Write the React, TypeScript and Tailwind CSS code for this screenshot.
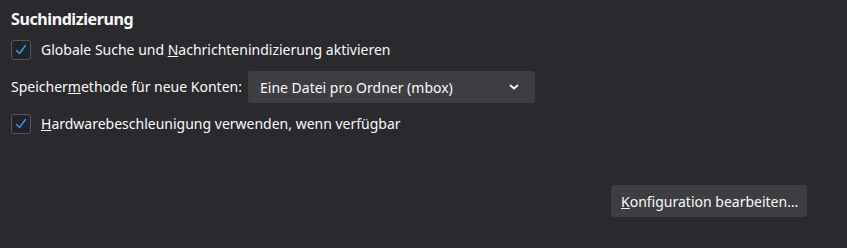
import React from 'react';

const Check = () => (
  <span className="flex h-[20px] w-[20px] shrink-0 items-center justify-center rounded-[3px] border border-[#56565b] bg-[#232327]">
    <svg width="14" height="14" viewBox="0 0 14 14" fill="none">
      <path d="M2.5 7.5 L5.5 10.5 L11.5 2.5" stroke="#2a9bf0" strokeWidth="1.5" strokeLinecap="round" strokeLinejoin="round" />
    </svg>
  </span>
);

const App = () => {
  return (
    <div
      className="h-[248px] w-[847px] overflow-hidden whitespace-nowrap bg-[#2a2a2e] text-[14px] text-[#f9f9fa]"
      style={{ fontFamily: '"Noto Sans", "Open Sans", sans-serif' }}
    >
      <div className="flex flex-col pl-[11px] pt-[8px]">
        <h1 className="h-[22px] text-[16px] font-bold leading-[22px] tracking-[-0.4px]">Suchindizierung</h1>
        <div className="mt-[10px] flex h-[20px] items-center gap-[10px]">
          <Check />
          <span className="leading-[20px]">
            Globale Suche und <u>N</u>achrichtenindizierung aktivieren
          </span>
        </div>
        <div className="mt-[11px] flex h-[32px] items-center">
          <span className="w-[237px] leading-[20px]">
            Speicher<u>m</u>ethode für neue Konten:
          </span>
          <div className="flex h-[32px] w-[287px] items-center justify-between rounded-[3px] bg-[#3d3d42] pl-[12px] pr-[16px]">
            <span>Eine Datei pro Ordner (mbox)</span>
            <svg width="10" height="8" viewBox="0 0 10 8" fill="none">
              <path d="M1.5 2.5 L5 5.5 L8.5 2.5" stroke="#f9f9fa" strokeWidth="1.8" strokeLinecap="round" strokeLinejoin="round" />
            </svg>
          </div>
        </div>
        <div className="mt-[11px] flex h-[20px] items-center gap-[10px]">
          <Check />
          <span className="leading-[20px]">
            <u>H</u>ardwarebeschleunigung verwenden, wenn verfügbar
          </span>
        </div>
        <div className="mt-[51px] flex justify-end pr-[40px]">
          <button className="flex h-[32px] w-[196px] items-center rounded-[3px] bg-[#3d3d42] px-[10px]">
            <span>
              <u>K</u>onfiguration bearbeiten…
            </span>
          </button>
        </div>
      </div>
    </div>
  );
};

export default App;
